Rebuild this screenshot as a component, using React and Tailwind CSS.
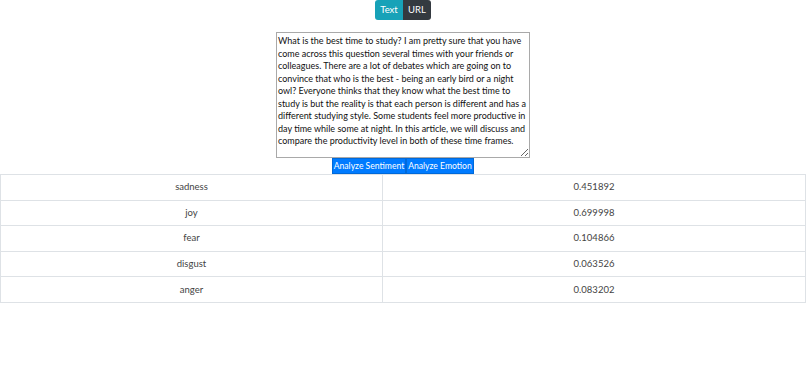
import React, { useState } from "react";

const sampleText =
  "What is the best time to study? I am pretty sure that you have come across this question several times with your friends or colleagues. There are a lot of debates which are going on to convince that who is the best - being an early bird or a night owl? Everyone thinks that they know what the best time to study is but the reality is that each person is different and has a different studying style. Some students feel more productive in day time while some at night. In this article, we will discuss and compare the productivity level in both of these time frames.";

const results = [
  { label: "sadness", score: "0.451892" },
  { label: "joy", score: "0.699998" },
  { label: "fear", score: "0.104866" },
  { label: "disgust", score: "0.063526" },
  { label: "anger", score: "0.083202" },
];

const App = () => {
  const [mode, setMode] = useState("text");
  const [text, setText] = useState(sampleText);

  return (
    <div
      className="w-full min-h-[369px] bg-white text-[#212529]"
      style={{ fontFamily: "Lato, 'Open Sans', sans-serif" }}
    >
      {/* mode switch */}
      <div className="flex justify-center">
        <button
          onClick={() => setMode("text")}
          className="h-[20px] w-[28px] rounded-l-[3px] bg-[#17a2b8] text-[9.5px] text-white"
        >
          Text
        </button>
        <button
          onClick={() => setMode("url")}
          className="h-[20px] w-[28px] rounded-r-[3px] bg-[#343a40] text-[9.5px] text-white"
        >
          URL
        </button>
      </div>

      <div className="mt-[12px] flex justify-center">
        <textarea
          value={text}
          onChange={(e) => setText(e.target.value)}
          className="h-[126px] w-[254px] resize border border-[#a9a9a9] px-[1px] py-[2px] text-[9px] leading-[12.55px] text-[#111] outline-none"
          style={{ scrollbarWidth: "none" }}
        />
      </div>

      <div className="flex justify-center">
        <button className="h-[16px] w-[74px] whitespace-nowrap border border-[#0069d9] bg-[#007bff] text-[8.6px] leading-none text-white">
          Analyze Sentiment
        </button>
        <button className="h-[16px] w-[68px] whitespace-nowrap border border-[#0069d9] bg-[#007bff] text-[8.6px] leading-none text-white">
          Analyze Emotion
        </button>
      </div>

      {/* results */}
      <div className="border-x border-b border-[#dee2e6]">
        {results.map((row) => (
          <div
            key={row.label}
            className="grid h-[25.6px] grid-cols-[382px_1fr] border-t border-[#dee2e6] text-[9.5px] text-[#444]"
          >
            <div className="flex items-center justify-center border-r border-[#dee2e6]">
              {row.label}
            </div>
            <div className="flex items-center justify-center">{row.score}</div>
          </div>
        ))}
      </div>
    </div>
  );
};

export default App;
